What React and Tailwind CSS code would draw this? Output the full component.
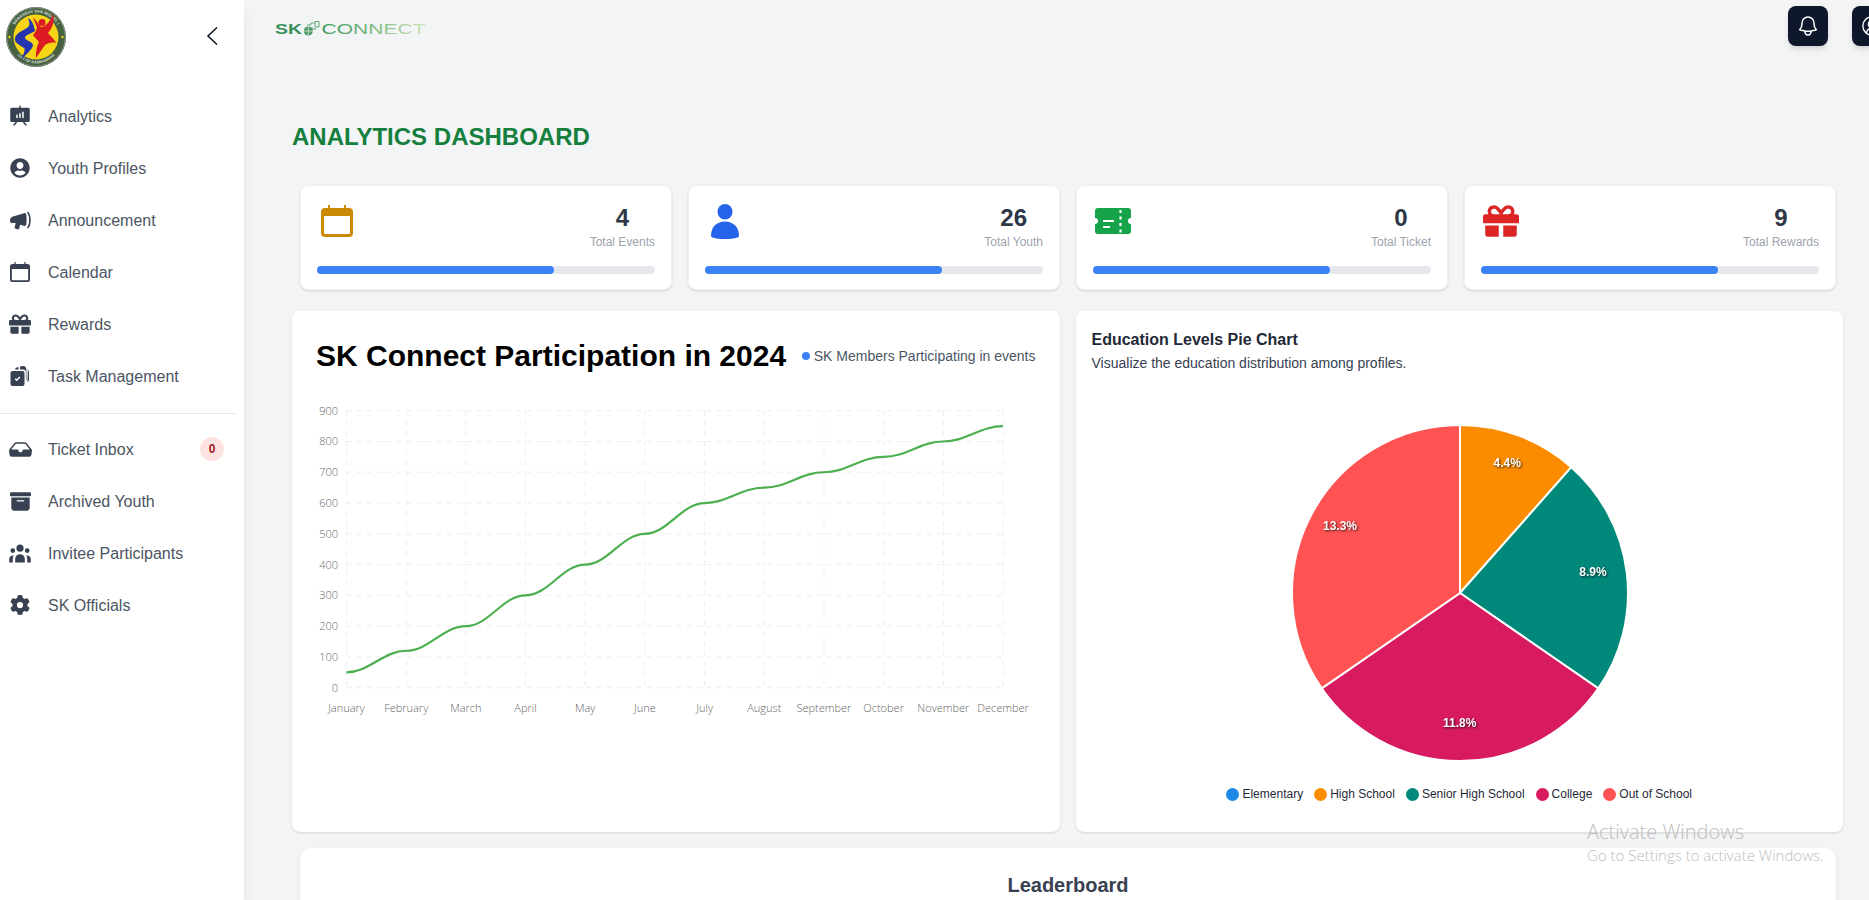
import React from 'react';
import { FaUserCircle, FaGift } from 'react-icons/fa';
import { FaBoxArchive, FaGear } from 'react-icons/fa6';
import { BsInboxFill } from 'react-icons/bs';
import { HiUserGroup } from 'react-icons/hi';
import { PiPresentationChartFill } from 'react-icons/pi';
import { HiOutlineBell } from 'react-icons/hi2';
import { CircleUserRound } from 'lucide-react';

function CalendarIcon({ size, className }) {
  return (
    <svg width={size} height={size} viewBox="0 0 32 32" className={className} fill="currentColor">
      <path fillRule="evenodd" d="M7 0h2v3h14V0h2v3h3a4 4 0 0 1 4 4v21a4 4 0 0 1-4 4H4a4 4 0 0 1-4-4V7a4 4 0 0 1 4-4h3zM3 11v17a1 1 0 0 0 1 1h24a1 1 0 0 0 1-1V11z" />
    </svg>
  );
}

function MegaphoneIcon() {
  return (
    <svg width="24" height="24" viewBox="0 0 24 24" fill="#374151">
      <path d="M2 12.500c0-2 1.300-3.500 3-4l12-3.500c.8 0 1.300 1 1.500 3v7c-.2 2-.7 3-1.500 3l-5-1.300-.8 3.800c-.2.800-1 1-1.700.8l-2-.6c-.7-.2-1-.9-.8-1.600l1-3.800-2.700-.6C3.300 16 2 14.500 2 12.500z" />
      <path d="M20 4.500c1.500 2 2 4.500 2 7.500s-.5 5.500-2 7.500" fill="none" stroke="#374151" strokeWidth="1.600" strokeLinecap="round" />
    </svg>
  );
}

function TaskIcon() {
  return (
    <svg width="24" height="24" viewBox="0 0 24 24" fill="#374151">
      <path fillRule="evenodd" d="M4.500 7h10a2 2 0 0 1 2 2v11a2 2 0 0 1-2 2h-10a2 2 0 0 1-2-2V9a2 2 0 0 1 2-2zm2.200 8.200 2 2 3.600-3.800-1-1-2.600 2.800-1-1z" />
      <path d="M7 5.500C7.300 4.100 8.300 3.300 9.500 3.200l1-.2v2.500zM12 2.600l2.500-.6c2.200-.3 3.500 1 3.800 2.800l.2 10.500-.6 1V8.500c0-1.900-1-3-2.900-3H12z" />
      <path d="M19.800 5.500c.8.800 1.200 1.700 1.200 3v7c0 1.200-.5 2-1.500 2.500z" />
    </svg>
  );
}

function PersonIcon({ className }) {
  return (
    <svg width="28" height="35" viewBox="0 0 28 35" className={className} fill="currentColor">
      <ellipse cx="14" cy="7.800" rx="7.500" ry="7.800" />
      <path d="M0 31.500C0 23 6 17.500 14 17.500s14 5.500 14 14c0 1-.5 1.500-1.500 2-3.500 1-8 1.500-12.500 1.500S5 34.500 1.500 33.500C.5 33 0 32.500 0 31.500z" />
    </svg>
  );
}

function TicketIcon({ className }) {
  return (
    <svg width="36" height="26" viewBox="0 0 36 26" className={className}>
      <path fill="currentColor" d="M3 0h30a3 3 0 0 1 3 3v7a3 3 0 0 0 0 6v7a3 3 0 0 1-3 3H3a3 3 0 0 1-3-3v-7a3 3 0 0 0 0-6V3a3 3 0 0 1 3-3z" />
      <path stroke="#fff" strokeWidth="2.200" strokeDasharray="3 3.500" d="M25.500 2v23" />
      <path stroke="#fff" strokeWidth="2.200" d="M8 13h11M8 19h7" />
    </svg>
  );
}

function Emblem() {
  return (
    <svg width="60" height="60" viewBox="0 0 60 60">
      <defs>
        <path id="emblem-top" d="M5.500 30a24.500 24.500 0 0 1 49 0" />
        <path id="emblem-bottom" d="M5 36a25.500 25.500 0 0 0 50 0" />
      </defs>
      <circle cx="30" cy="30" r="30" fill="#45613f" />
      <circle cx="30" cy="30" r="29.300" fill="none" stroke="#8a958a" strokeWidth="1" />
      <circle cx="30" cy="30" r="22.500" fill="#f7d516" />
      <text fill="#d9ded9" fontSize="4" fontWeight="700" fontFamily="Liberation Sans, sans-serif">
        <textPath href="#emblem-top" startOffset="50%" textAnchor="middle">BARANGAY SAN MIGUEL I</textPath>
      </text>
      <text fill="#d9ded9" fontSize="3.800" fontWeight="700" fontFamily="Liberation Sans, sans-serif">
        <textPath href="#emblem-bottom" startOffset="50%" textAnchor="middle">CITY OF DASMARINAS</textPath>
      </text>
      <path fill="#2433b0" d="M22 11C26 13 28 18 29 24C24 27 19 28 19 31C20 34 26 34 27 38C27 42 20 47 16 52C17 47 20 43 18 41C14 38 8 36 9 31C10 25 20 23 23 19C24 16 23 14 22 11Z" />
      <path fill="#dc1c22" d="M27 10C30 13 32 17 35 20C39 20 44 15 47 7C49 14 46 22 42 26C44 29 48 31 50 36C46 35 42 36 39 38C36 42 33 47 30 51C30 46 30 41 33 35C31 32 28 30 27 28C30 25 32 21 30 18C29 16 28 13 27 10Z" />
      <circle cx="36" cy="15.500" r="3.500" fill="#dc1c22" />
      <circle cx="3.500" cy="30" r="1.200" fill="#f7d516" />
      <circle cx="56.500" cy="30" r="1.200" fill="#f7d516" />
    </svg>
  );
}

function BrandLogo() {
  return (
    <svg width="152" height="20" viewBox="0 0 152 20" className="block">
      <defs>
        <linearGradient id="brand-fade" x1="0" x2="1" y1="0" y2="0">
          <stop offset="0" stopColor="#3f9a5c" />
          <stop offset="0.5" stopColor="#7fbb84" />
          <stop offset="1" stopColor="#cfe3b9" />
        </linearGradient>
      </defs>
      <text x="0" y="13.500" fontSize="15" fontWeight="700" fill="#3a8f5c" fontFamily="Liberation Sans, sans-serif" textLength="27" lengthAdjust="spacingAndGlyphs">SK</text>
      <circle cx="33.300" cy="11" r="4.500" fill="#4d9a66" />
      <path d="M29 11h9M33.300 6.500v9" stroke="#f3f4f6" strokeWidth="0.700" />
      <path d="M32 5h4V3h4v4h4V1.500h-4V3M37 7v2h4" fill="none" stroke="#5ca673" strokeWidth="1" />
      <text x="46.500" y="13.500" fontSize="15" fill="url(#brand-fade)" fontFamily="Liberation Sans, sans-serif" textLength="104" lengthAdjust="spacingAndGlyphs">CONNECT</text>
    </svg>
  );
}

const navTop = [
  { label: 'Analytics', icon: <PiPresentationChartFill size={24} color="#374151" /> },
  { label: 'Youth Profiles', icon: <FaUserCircle size={20} color="#374151" /> },
  { label: 'Announcement', icon: <MegaphoneIcon /> },
  { label: 'Calendar', icon: <CalendarIcon size={20} className="text-[#374151]" /> },
  { label: 'Rewards', icon: <FaGift size={22} color="#374151" /> },
  { label: 'Task Management', icon: <TaskIcon /> },
];

const navBottom = [
  { label: 'Ticket Inbox', icon: <BsInboxFill size={23} color="#374151" />, badge: 0 },
  { label: 'Archived Youth', icon: <FaBoxArchive size={21} color="#374151" /> },
  { label: 'Invitee Participants', icon: <HiUserGroup size={24} color="#374151" /> },
  { label: 'SK Officials', icon: <FaGear size={20} color="#374151" /> },
];

function NavItem({ item }) {
  return (
    <div className="flex h-[52px] items-center gap-4 pl-2 pr-5 text-base text-[#4b5563]">
      <span className="flex w-6 justify-center">{item.icon}</span>
      <span className="flex-1 pt-[2px]">{item.label}</span>
      {item.badge !== undefined && (
        <span className="flex h-6 w-6 items-center justify-center rounded-full bg-[#fee2e2] text-xs font-bold text-[#991b1b]">
          {item.badge}
        </span>
      )}
    </div>
  );
}

function Sidebar() {
  return (
    <aside className="z-10 h-full w-[244px] shrink-0 bg-white shadow-lg">
      <div className="flex h-[90px] items-start justify-between pl-1.5 pr-4 pt-[7px]">
        <Emblem />
        <svg width="32" height="32" viewBox="0 0 32 32" fill="none" stroke="#111827" strokeWidth="1.600" className="mt-[13px]">
          <path d="M21 7.500 12 16l9 8.500" />
        </svg>
      </div>
      {navTop.map((item) => <NavItem key={item.label} item={item} />)}
      <div className="mb-[9px] mr-2 mt-[11px] h-px bg-[#e5e7eb]"></div>
      {navBottom.map((item) => <NavItem key={item.label} item={item} />)}
    </aside>
  );
}

function StatCard({ icon, value, label }) {
  return (
    <div className="h-[105px] rounded-lg border border-[#f0f1f3] bg-white px-4 pb-[15px] pt-4 shadow-sm">
      <div className="flex items-start justify-between">
        <div className="-mt-px flex h-10 w-10 items-center justify-center">{icon}</div>
        <div className="text-center">
          <div className="text-2xl font-bold text-[#2d3748]">{value}</div>
          <div className="text-xs text-[#9ca3af]">{label}</div>
        </div>
      </div>
      <div className="mt-4 h-2 rounded-full bg-[#e5e7eb]">
        <div className="h-2 w-[70%] rounded-full bg-[#3b82f6]"></div>
      </div>
    </div>
  );
}

const months = ['January', 'February', 'March', 'April', 'May', 'June', 'July', 'August', 'September', 'October', 'November', 'December'];
const participation = [50, 120, 200, 300, 400, 500, 600, 650, 700, 750, 800, 850];

const chartX = (i) => 30.5 + i * (656.5 / 11);
const chartY = (v) => 287.7 - v * (277 / 900);

function linePath() {
  let d = `M${chartX(0)} ${chartY(participation[0])}`;
  for (let i = 1; i < participation.length; i++) {
    const x0 = chartX(i - 1);
    const x1 = chartX(i);
    const bend = (x1 - x0) * 0.38;
    d += ` C${x0 + bend} ${chartY(participation[i - 1])} ${x1 - bend} ${chartY(participation[i])} ${x1} ${chartY(participation[i])}`;
  }
  return d;
}

function LineChart() {
  const ticks = [0, 100, 200, 300, 400, 500, 600, 700, 800, 900];
  return (
    <svg width="720" height="330" className="mt-[26px] block" fontFamily="Open Sans, sans-serif" fontWeight="300" fontSize="11" fill="#666">
      {ticks.map((t) => (
        <g key={t}>
          <line x1={chartX(0)} x2={chartX(11)} y1={chartY(t)} y2={chartY(t)} stroke="#eeeeee" strokeDasharray="5 5" />
          <text x="22" y={chartY(t) + 4} textAnchor="end">{t}</text>
        </g>
      ))}
      {months.map((m, i) => (
        <g key={m}>
          <line x1={chartX(i)} x2={chartX(i)} y1={chartY(900)} y2={chartY(0)} stroke="#eeeeee" strokeDasharray="5 5" />
          <text x={chartX(i)} y="312" textAnchor="middle">{m}</text>
        </g>
      ))}
      <path d={linePath()} fill="none" stroke="#4caf50" strokeWidth="2.200" />
    </svg>
  );
}

const pieCx = 175;
const pieCy = 175;
const pieR = 168;

function polar(deg) {
  const a = (deg * Math.PI) / 180;
  return [pieCx + pieR * Math.sin(a), pieCy - pieR * Math.cos(a)];
}

function slice(from, to) {
  const [x0, y0] = polar(from);
  const [x1, y1] = polar(to);
  const large = to - from > 180 ? 1 : 0;
  return `M${pieCx} ${pieCy} L${x0} ${y0} A${pieR} ${pieR} 0 ${large} 1 ${x1} ${y1} Z`;
}

const pieSlices = [
  { from: 0, to: 41.5, color: '#fb8c00', label: '4.4%', x: 222.300, y: 45 },
  { from: 41.5, to: 124.6, color: '#00897b', label: '8.9%', x: 308, y: 154 },
  { from: 124.6, to: 235.4, color: '#d81b60', label: '11.8%', x: 174.700, y: 305 },
  { from: 235.4, to: 360, color: '#ff5252', label: '13.3%', x: 55, y: 108 },
];

const legend = [
  { label: 'Elementary', color: 'bg-[#1e88e5]' },
  { label: 'High School', color: 'bg-[#fb8c00]' },
  { label: 'Senior High School', color: 'bg-[#00897b]' },
  { label: 'College', color: 'bg-[#d81b60]' },
  { label: 'Out of School', color: 'bg-[#ff5252]' },
];

function PieChart() {
  return (
    <svg width="350" height="350" className="ml-[193px] mt-[45px] block">
      {pieSlices.map((s) => (
        <path key={s.label} d={slice(s.from, s.to)} fill={s.color} stroke="#fff" strokeWidth="2" />
      ))}
      {pieSlices.map((s) => (
        <text
          key={s.label}
          x={s.x}
          y={s.y + 4}
          textAnchor="middle"
          fontSize="12"
          fontWeight="700"
          fill="#fff"
          className="drop-shadow-[1px_1px_1px_rgba(0,0,0,0.75)]"
        >
          {s.label}
        </text>
      ))}
    </svg>
  );
}

export default function App() {
  return (
    <div className="relative flex h-[900px] w-full overflow-hidden bg-[#f3f4f6] font-['Liberation_Sans',Arial,sans-serif]">
      <Sidebar />
      <main className="min-w-0 flex-1 overflow-hidden">
        <header className="flex items-start justify-between pl-[31px] pt-1.5">
          <div className="pt-[14px]"><BrandLogo /></div>
          <div className="-mr-[23px] flex gap-6">
            <button className="flex h-10 w-10 items-center justify-center rounded-lg bg-[#0f172a] text-white shadow-md">
              <HiOutlineBell size={24} />
            </button>
            <button className="flex h-10 w-10 items-center justify-center rounded-lg bg-[#0f172a] text-white shadow-md">
              <CircleUserRound size={22} strokeWidth={1.5} />
            </button>
          </div>
        </header>

        <div className="pl-12 pr-[26px]">
          <h1 className="mb-8 mt-[75px] text-2xl font-bold text-[#15803d]">ANALYTICS DASHBOARD</h1>

          <div className="ml-2 mr-[7px] grid grid-cols-4 gap-4">
            <StatCard icon={<CalendarIcon size={32} className="text-[#ca8a04]" />} value="4" label="Total Events" />
            <StatCard icon={<PersonIcon className="text-[#2563eb]" />} value="26" label="Total Youth" />
            <StatCard icon={<TicketIcon className="text-[#16a34a]" />} value="0" label="Total Ticket" />
            <StatCard icon={<FaGift size={36} className="text-[#dc2626]" />} value="9" label="Total Rewards" />
          </div>

          <div className="mt-[21px] grid grid-cols-2 gap-4">
            <section className="h-[521px] rounded-lg bg-white px-6 pt-[27px] shadow-sm">
              <div className="flex items-center justify-between">
                <h2 className="text-3xl font-bold text-black">SK Connect Participation in 2024</h2>
                <div className="flex items-center gap-1 text-sm text-[#4b5563]">
                  <span className="h-2 w-2 rounded-full bg-[#3b82f6]"></span>
                  SK Members Participating in events
                </div>
              </div>
              <LineChart />
            </section>

            <section className="h-[521px] rounded-lg bg-white px-4 pt-[17px] shadow-sm">
              <h2 className="text-base font-bold text-[#1f2937]">Education Levels Pie Chart</h2>
              <p className="mt-px text-sm text-[#374151]">Visualize the education distribution among profiles.</p>
              <PieChart />
              <div className="mt-[18px] flex justify-center gap-[11px] text-xs text-[#1f2937]">
                {legend.map((l) => (
                  <div key={l.label} className="flex items-center gap-[3px]">
                    <span className={`h-[13px] w-[13px] rounded-full ${l.color}`}></span>
                    {l.label}
                  </div>
                ))}
              </div>
            </section>
          </div>

          <section className="ml-2 mr-[7px] mt-4 h-[200px] rounded-xl bg-white pt-[23px] text-center shadow-sm">
            <h2 className="text-xl font-bold text-[#374151]">Leaderboard</h2>
          </section>
        </div>
      </main>

      <div className="absolute left-[1587px] top-[820px] font-['Open_Sans',sans-serif] font-light text-[#bdbdbd]">
        <div className="text-[20px] leading-6">Activate Windows</div>
        <div className="text-[15px] leading-[22px]">Go to Settings to activate Windows.</div>
      </div>
    </div>
  );
}
